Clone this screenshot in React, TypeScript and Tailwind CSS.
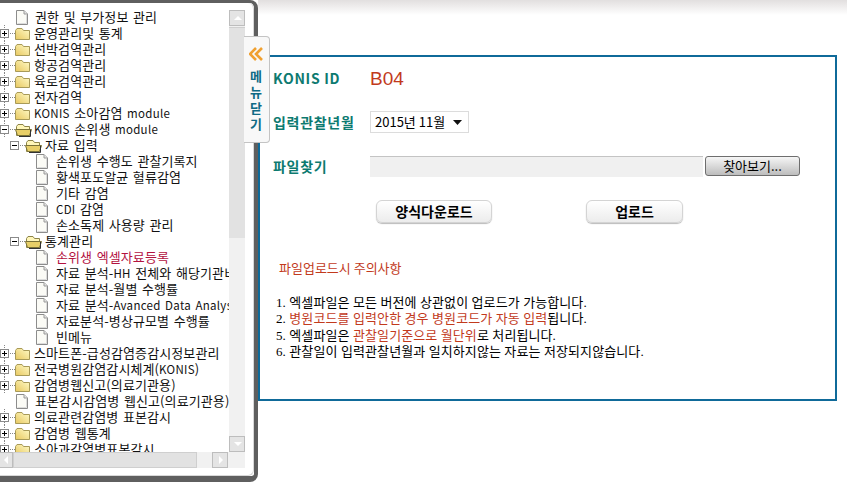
import React from "react";

type Kind = "plus" | "open" | "sub" | "leaf" | "file";

const rows: { k: Kind; t: string; red?: boolean }[] = [
  { k: "file", t: "권한 및 부가정보 관리" },
  { k: "plus", t: "운영관리및 통계" },
  { k: "plus", t: "선박검역관리" },
  { k: "plus", t: "항공검역관리" },
  { k: "plus", t: "육로검역관리" },
  { k: "plus", t: "전자검역" },
  { k: "plus", t: "KONIS 소아감염 module" },
  { k: "open", t: "KONIS 손위생 module" },
  { k: "sub", t: "자료 입력" },
  { k: "leaf", t: "손위생 수행도 관찰기록지" },
  { k: "leaf", t: "황색포도알균 혈류감염" },
  { k: "leaf", t: "기타 감염" },
  { k: "leaf", t: "CDI 감염" },
  { k: "leaf", t: "손소독제 사용량 관리" },
  { k: "sub", t: "통계관리" },
  { k: "leaf", t: "손위생 엑셀자료등록", red: true },
  { k: "leaf", t: "자료 분석-HH 전체와 해당기관비교" },
  { k: "leaf", t: "자료 분석-월별 수행률" },
  { k: "leaf", t: "자료 분석-Avanced Data Analysis" },
  { k: "leaf", t: "자료분석-병상규모별 수행률" },
  { k: "leaf", t: "빈메뉴" },
  { k: "plus", t: "스마트폰-급성감염증감시정보관리" },
  { k: "plus", t: "전국병원감염감시체계(KONIS)" },
  { k: "plus", t: "감염병웹신고(의료기관용)" },
  { k: "file", t: "표본감시감염병 웹신고(의료기관용)" },
  { k: "plus", t: "의료관련감염병 표본감시" },
  { k: "plus", t: "감염병 웹통계" },
  { k: "plus", t: "소아과감염병표본감시" },
];

function Mixed({ t }: { t: string }) {
  const parts = t.split(/([A-Za-z][A-Za-z ]*[A-Za-z])/);
  return (
    <>
      {parts.map((p, i) =>
        i % 2 === 1 ? (
          <span key={i} className="text-[11.5px] tracking-[0.3px] leading-none">{p}</span>
        ) : (
          <React.Fragment key={i}>{p}</React.Fragment>
        )
      )}
    </>
  );
}

function Box({ x, open }: { x: number; open?: boolean }) {
  return (
    <g>
      <rect x={x + 0.5} y={4.5} width={8} height={8} fill="#fff" stroke="#8a8a8a" />
      <path d={`M${x + 2} 8.5h5`} stroke="#000" />
      {!open && <path d={`M${x + 4.5} 6v5`} stroke="#000" />}
      <path d={`M${x + 10} 8.5h5`} stroke="#888" strokeDasharray="1 1" />
    </g>
  );
}

function Grad() {
  return (
    <defs>
      <linearGradient id="fold" x1="1" y1="0" x2="0" y2="1">
        <stop offset="0" stopColor="#fffbc8" />
        <stop offset="1" stopColor="#e8c860" />
      </linearGradient>
    </defs>
  );
}

function ClosedFolder({ x }: { x: number }) {
  return (
    <g transform={`translate(${x} 1)`}>
      <path d="M0.5 4.5 L2 2.5 H7 L8.5 4.5 H14.5 V13.5 H0.5 Z" fill="url(#fold)" stroke="#a89a58" />
    </g>
  );
}

function OpenFolder({ x }: { x: number }) {
  return (
    <g transform={`translate(${x} 1)`}>
      <path d="M1.5 4.5 L3 2.5 H8 L9.5 4.5 H14.5 V13.5 H1.5 Z" fill="#fff6b8" stroke="#8d8448" />
      <path d="M0.5 7.5 H12 L16.5 7.5 L14.5 13.5 H2.5 Z" fill="#e8cf68" stroke="#7a7238" />
      <path d="M15.5 8 V14.5 H4" stroke="#333" fill="none" />
    </g>
  );
}

function FileIcon({ x }: { x: number }) {
  return (
    <g transform={`translate(${x} 0)`}>
      <path d="M0.5 1.5 H8 L11.5 5 V15.5 H0.5 Z" fill="#fbfbf6" stroke="#8c8c8c" />
      <path d="M8 1.5 V5 H11.5" fill="#e4e4e4" stroke="#9a9a9a" />
      <path d="M1.5 14.5 H10.5 V6" fill="none" stroke="#dcdcdc" />
    </g>
  );
}

const widths: Record<Kind, number> = { plus: 34, open: 34, sub: 45, leaf: 56, file: 35 };

function RowIcon({ k }: { k: Kind }) {
  return (
    <svg width={widths[k]} height={16} className="shrink-0 block">
      <Grad />
      {(k === "plus" || k === "open") && (
        <>
          <path d="M4.5 0V4M4.5 13V16" stroke="#888" strokeDasharray="1 1" />
          <Box x={0} open={k === "open"} />
          {k === "plus" ? <ClosedFolder x={15} /> : <OpenFolder x={15} />}
        </>
      )}
      {k === "sub" && (
        <>
          <Box x={10} open />
          <OpenFolder x={25} />
        </>
      )}
      {k === "leaf" && <FileIcon x={36} />}
      {k === "file" && <FileIcon x={16} />}
    </svg>
  );
}

function Arrow({ d }: { d: "up" | "down" | "left" | "right" }) {
  const p = {
    up: "M4 10h8l-4-4z",
    down: "M4 6h8l-4 4z",
    left: "M10 4v8l-4-4z",
    right: "M6 4v8l4-4z",
  }[d];
  return (
    <svg width={16} height={16} className="block">
      <path d={p} fill="#ffffff" />
    </svg>
  );
}

function ScrollBtn({ d, className = "" }: { d: "up" | "down" | "left" | "right"; className?: string }) {
  return (
    <div className={`w-4 h-4 shrink-0 flex items-center justify-center bg-[#e4e4e4] border border-[#bdbdbd] ${className}`}>
      <Arrow d={d} />
    </div>
  );
}

function Label({ children, className = "" }: { children: React.ReactNode; className?: string }) {
  return (
    <div className={`w-[97px] shrink-0 text-[14px] tracking-[0.7px] font-bold text-[#0d7a70] whitespace-nowrap ${className}`}>
      {children}
    </div>
  );
}

function PillButton({ children, className = "" }: { children: React.ReactNode; className?: string }) {
  return (
    <button className={`h-[23px] flex items-center justify-center rounded-md border border-[#d4d4d4] bg-linear-to-b from-white to-[#ececec] shadow-[0_1px_1px_#bbbbbb] text-[14px] font-bold text-black ${className}`}>
      {children}
    </button>
  );
}

export default function App() {
  return (
    <div className="relative w-[847px] h-[499px] bg-white flex overflow-hidden font-['Noto_Sans_CJK_KR','Liberation_Sans',sans-serif]">
      {/* tree panel */}
      <aside className="w-[258px] h-[482px] shrink-0 border-t-[3px] border-r-[4px] border-b-[6px] border-[#5f5f5f] rounded-tr-[8px] rounded-br-[8px] bg-white">
        <div className="h-full border-r border-b border-[#d8d8d8] rounded-br-[6px] rounded-tr-[6px] pt-[6px]">
          <div className="flex h-[443px]">
            <div className="w-[229px] shrink-0 overflow-hidden">
              {rows.map((r, i) => (
                <div key={i} className="h-4 flex items-center whitespace-nowrap">
                  <RowIcon k={r.k} />
                  <div className={`text-[13px] leading-4 tracking-[0.1px] [word-spacing:1.5px] ${r.red ? "text-[#b3123f]" : "text-[#111]"}`}>
                    <Mixed t={r.t} />
                  </div>
                </div>
              ))}
            </div>
            <div className="w-4 shrink-0 flex flex-col bg-[#f1f1f1] mt-[1px]">
              <ScrollBtn d="up" />
              <div className="h-[211px] mt-[1px] bg-[#e2e2e2] border-t border-[#cfcfcf]" />
              <div className="flex-1" />
              <ScrollBtn d="down" />
            </div>
          </div>
          <div className="flex h-4 w-[245px] bg-[#f1f1f1]">
            <div className="w-[13px] shrink-0 overflow-hidden flex justify-end">
              <ScrollBtn d="left" />
            </div>
            <div className="w-[184px] bg-[#e2e2e2] border border-[#cfcfcf]" />
            <div className="flex-1" />
            <ScrollBtn d="right" className="mr-[17px]" />
          </div>
        </div>
      </aside>

      {/* main */}
      <main className="flex-1 min-w-0 flex flex-col">
        <div className="h-[15px] bg-linear-to-b from-[#e2dfdf] to-white" />
        <div className="h-[40px]" />
        <section className="h-[346px] mr-[10px] border-2 border-[#0f6a99] pl-[13px] pt-[9px]">
          <div className="flex items-center h-[24px]">
            <Label>KONIS ID</Label>
            <div className="font-['Liberation_Sans',sans-serif] text-[19px] text-[#c23a1c] leading-none">B04</div>
          </div>
          <div className="flex items-center h-[22px] mt-[21px]">
            <Label>입력관찰년월</Label>
            <div className="w-[99px] h-[22px] border border-[#dcdcdc] flex items-center justify-between pl-[4px] pr-[6px] bg-white">
              <span className="text-[13px] text-black whitespace-nowrap">2015년 11월</span>
              <svg width={9} height={5} className="block"><path d="M0 0h9L4.5 5z" fill="#111" /></svg>
            </div>
          </div>
          <div className="flex items-start h-[21px] mt-[23px]">
            <Label>파일찾기</Label>
            <div className="w-[333px] h-[21px] bg-[#f0f0f0] border-t border-[#c4c4c4]" />
            <button className="ml-[2px] w-[95px] h-[20px] pb-[2px] rounded-[3px] border border-[#6e6e6e] bg-linear-to-b from-[#f6f6f6] to-[#bdbdbd] text-[13px] leading-none text-black flex items-center justify-center">찾아보기...</button>
          </div>
          <div className="flex mt-[23px] ml-[103px]">
            <PillButton className="w-[116px]">양식다운로드</PillButton>
            <PillButton className="w-[97px] ml-[94px]">업로드</PillButton>
          </div>
          <div className="mt-[37px] ml-[6px] text-[13px] leading-4 text-[#c23a1c]">파일업로드시 주의사항</div>
          <div className="mt-[19px] ml-[3px] text-[13px] tracking-[0.1px] leading-[16.4px] text-black whitespace-nowrap font-['Liberation_Serif','Noto_Sans_CJK_KR',serif]">
            <p>1. 엑셀파일은 모든 버전에 상관없이 업로드가 가능합니다.</p>
            <p>2. <span className="text-[#c23a1c]">병원코드를 입력안한 경우 병원코드가 자동 입력</span>됩니다.</p>
            <p>5. 엑셀파일은 <span className="text-[#c23a1c]">관찰일기준으로 월단위</span>로 처리됩니다.</p>
            <p>6. 관찰일이 입력관찰년월과 일치하지않는 자료는 저장되지않습니다.</p>
          </div>
        </section>
      </main>

      {/* collapsible tab overlaying the panel edge */}
      <div className="absolute left-[244px] top-[36px] w-[26px] h-[107px] bg-[#f8f8f8] border border-l-0 border-[#c4c4c4] rounded-r-[4px] flex flex-col items-center pt-[10px]">
        <svg width={14} height={14} className="block ml-[-2px]">
          <path d="M7 1L1 7l6 6M13 1L7 7l6 6" fill="none" stroke="#f0a030" strokeWidth={2.6} />
        </svg>
        <div className="mt-[7px] text-[13px] leading-4 font-bold text-[#0f6a85] ml-[-1px] text-center">
          <div>메</div>
          <div>뉴</div>
          <div>닫</div>
          <div>기</div>
        </div>
      </div>
    </div>
  );
}
